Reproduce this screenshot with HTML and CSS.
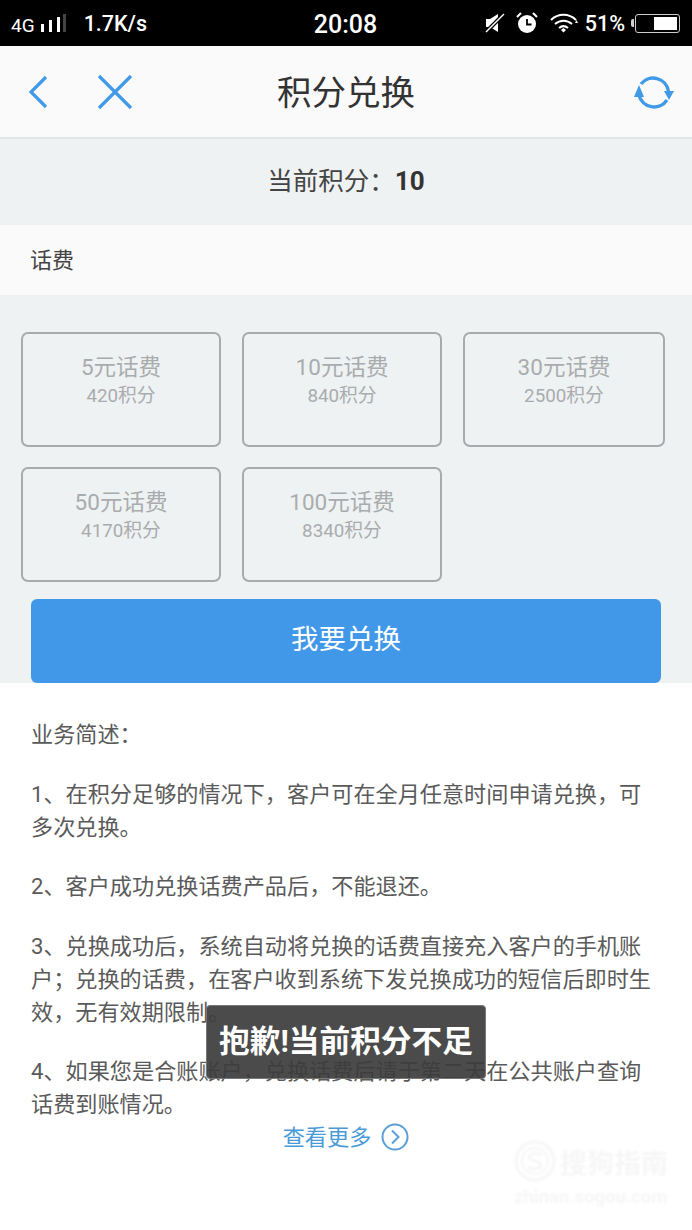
FILE: index.html
```html
<!DOCTYPE html>
<html lang="zh">

<head>
	<title>积分兑换</title>
	<link rel="stylesheet" href="styles.css">
</head>

<body>
	<div class="status-bar">
		<div class="status-left">
			<span class="net">4G</span>
			<svg class="signal" width="26" height="20" viewBox="0 0 26 20">
				<rect x="1" y="10" width="3" height="8" fill="#fff"/>
				<rect x="9" y="6" width="3" height="12" fill="#fff"/>
				<rect x="17" y="3" width="3" height="15" fill="#fff"/>
				<rect x="23" y="0" width="3" height="18" fill="#444"/>
			</svg>
			<span class="speed">1.7K/s</span>
		</div>
		<div class="status-time">20:08</div>
		<div class="status-right">
			<svg width="20" height="22" viewBox="0 0 20 22">
				<path d="M1 7h4l8-5v18l-8-5H1z" fill="#fff"/>
				<path d="M1 20L19 2" stroke="#000" stroke-width="4"/>
				<path d="M1 20L19 2" stroke="#fff" stroke-width="1.5"/>
			</svg>
			<svg class="alarm" width="22" height="22" viewBox="0 0 22 22">
				<circle cx="11" cy="12" r="9" fill="#fff"/>
				<path d="M11 7v5.500h4.500" fill="none" stroke="#000" stroke-width="1.800"/>
				<path d="M1 5l4-4M21 5l-4-4" stroke="#fff" stroke-width="2"/>
			</svg>
			<svg class="wifi" width="30" height="22" viewBox="0 0 30 22">
				<path d="M2 8C9 1 20 1 27 8M6 12c5-4.500 12-4.500 17 0M10 16c3-2.500 6-2.500 9 0" fill="none" stroke="#fff" stroke-width="2"/>
				<path d="M12 18l2.500-2 2.500 2-2.500 2.500z" fill="#fff"/>
				<path d="M26 11h3l-1.500-3z" fill="#fff"/>
			</svg>
			<span class="battery-pct">51%</span>
			<div class="battery-nub"></div>
			<div class="battery"><div class="battery-fill"></div></div>
		</div>
	</div>

	<header class="nav-bar">
		<div class="nav-left">
			<svg width="22" height="34" viewBox="0 0 22 34">
				<path d="M19 2L4 17l15 15" fill="none" stroke="#419ae8" stroke-width="3.200"/>
			</svg>
			<svg class="nav-close" width="36" height="36" viewBox="0 0 36 36">
				<path d="M2 2l32 32M34 2L2 34" fill="none" stroke="#419ae8" stroke-width="3.200"/>
			</svg>
		</div>
		<h1 class="nav-title">积分兑换</h1>
		<svg class="nav-refresh" width="40" height="36" viewBox="0 0 40 36">
			<path d="M7 10A15.500 15.500 0 0 1 34.500 17M33 26A15.500 15.500 0 0 1 5 21" fill="none" stroke="#419ae8" stroke-width="3.400"/>
			<path d="M0 23h10L5 11zM30 17h10l-5 9z" fill="#419ae8"/>
		</svg>
	</header>

	<div class="points">当前积分：<b>10</b></div>
	<div class="section-title">话费</div>

	<section class="exchange">
		<div class="cards">
			<div class="card"><div class="card-name">5元话费</div><div class="card-cost">420积分</div></div>
			<div class="card"><div class="card-name">10元话费</div><div class="card-cost">840积分</div></div>
			<div class="card"><div class="card-name">30元话费</div><div class="card-cost">2500积分</div></div>
			<div class="card"><div class="card-name">50元话费</div><div class="card-cost">4170积分</div></div>
			<div class="card"><div class="card-name">100元话费</div><div class="card-cost">8340积分</div></div>
		</div>
		<button class="submit">我要兑换</button>
	</section>

	<section class="desc">
		<p>业务简述：</p>
		<p>1、在积分足够的情况下，客户可在全月任意时间申请兑换，可多次兑换。</p>
		<p>2、客户成功兑换话费产品后，不能退还。</p>
		<p>3、兑换成功后，系统自动将兑换的话费直接充入客户的手机账户；兑换的话费，在客户收到系统下发兑换成功的短信后即时生效，无有效期限制。</p>
		<p>4、如果您是合账账户，兑换话费后请于第二天在公共账户查询话费到账情况。</p>
		<div class="more">
			<span>查看更多</span>
			<svg width="28" height="28" viewBox="0 0 28 28">
				<circle cx="14" cy="14" r="12.500" fill="none" stroke="#5b9fd8" stroke-width="2"/>
				<path d="M11 7.500l6.500 6.500-6.500 6.500" fill="none" stroke="#5b9fd8" stroke-width="2"/>
			</svg>
		</div>
	</section>

	<div class="toast">抱歉!当前积分不足</div>

	<div class="watermark">
		<div class="wm-top">
			<svg width="42" height="42" viewBox="0 0 42 42">
				<circle cx="21" cy="21" r="19" fill="none" stroke="#f6f6f6" stroke-width="3"/>
				<circle cx="21" cy="21" r="13" fill="none" stroke="#f6f6f6" stroke-width="2"/>
				<path d="M28 15c-4-3-13-2-13 2s12 4 12 8-9 5-13 2" fill="none" stroke="#f6f6f6" stroke-width="3"/>
			</svg>
			<span>搜狗指南</span>
		</div>
		<div class="wm-url">zhinan.sogou.com</div>
	</div>
</body>

</html>
```

FILE: styles.css
```css
* {
	box-sizing: border-box;
}
body {
	margin: 0;
	width: 692px;
	height: 1230px;
	overflow: hidden;
	position: relative;
	background-color: #fff;
	font-family: Roboto, "Noto Sans CJK SC", sans-serif;
	color: #555;
}
.status-bar {
	height: 46px;
	background-color: #000;
	color: #fff;
	display: grid;
	grid-template-columns: 1fr auto 1fr;
	align-items: center;
	padding: 0 12px 0 11px;
}
.status-left, .status-right {
	display: flex;
	align-items: center;
}
.status-right {
	justify-content: flex-end;
}
.net {
	font-size: 19px;
	margin-top: 5px;
}
.signal {
	margin-left: 5px;
	margin-top: 2px;
}
.speed {
	font-size: 21.500px;
	font-weight: 500;
	margin-left: 18px;
	margin-top: 1px;
}
.status-time {
	font-size: 25px;
	font-weight: 500;
	margin-top: 3px;
}
.alarm {
	margin-left: 11px;
}
.wifi {
	margin-left: 11px;
}
.battery-pct {
	font-size: 21.500px;
	font-weight: 500;
	margin-left: 6px;
	margin-top: 1px;
}
.battery-nub {
	width: 3px;
	height: 8px;
	margin-left: 6px;
	background-color: #ccc;
	border-radius: 2px 0 0 2px;
}
.battery {
	width: 45px;
	height: 19px;
	margin-left: 1px;
	border: 1.500px solid #ccc;
	border-radius: 3px;
	padding: 2px;
	display: flex;
	justify-content: flex-end;
}
.battery-fill {
	width: 23px;
	background-color: #fff;
}
.nav-bar {
	height: 93px;
	background-color: #fafafa;
	border-bottom: 2px solid #e2e5e6;
	display: flex;
	align-items: center;
	justify-content: space-between;
	padding: 0 18px 0 27px;
	position: relative;
}
.nav-left {
	display: flex;
	align-items: center;
}
.nav-close {
	margin-left: 48px;
}
.nav-title {
	position: absolute;
	left: 0;
	right: 0;
	margin: 0;
	padding-bottom: 4px;
	text-align: center;
	font-size: 34.500px;
	font-weight: 400;
	color: #333;
}
.points {
	height: 86px;
	padding-bottom: 7px;
	background-color: #eff2f3;
	display: flex;
	align-items: center;
	justify-content: center;
	font-size: 25.500px;
	color: #444;
}
.points b {
	margin-top: 4px;
	font-weight: 700;
	font-size: 26px;
	color: #333;
}
.section-title {
	height: 70px;
	padding: 0 0 4px 30px;
	background-color: #fafafa;
	display: flex;
	align-items: center;
	font-size: 22px;
	color: #444;
}
.exchange {
	height: 388px;
	background-color: #eff2f3;
	padding-top: 37px;
}
.cards {
	display: grid;
	grid-template-columns: 200px 200px 202px;
	grid-auto-rows: 115px;
	column-gap: 21px;
	row-gap: 20px;
	padding-left: 21px;
}
.card {
	border: 2px solid #a8abad;
	border-radius: 7px;
	text-align: center;
	padding-top: 18px;
	color: #a9acae;
}
.card-name {
	font-size: 22.500px;
	line-height: 30px;
}
.card-cost {
	font-size: 18.800px;
	line-height: 28px;
}
.submit {
	display: block;
	width: 630px;
	height: 84px;
	margin: 17px 0 0 31px;
	padding-bottom: 10px;
	border: 0;
	border-radius: 6px;
	background-color: #4198e8;
	color: #fff;
	font-family: inherit;
	font-size: 27.500px;
}
.desc {
	padding: 35px 31px 0;
	font-size: 22.150px;
	line-height: 33px;
	color: #5a5a5a;
}
.desc p {
	margin: 0 0 26.500px;
}
.more {
	display: flex;
	align-items: center;
	justify-content: center;
	gap: 10px;
	margin-top: -27px;
	color: #4a9ad8;
}
.toast {
	position: absolute;
	left: 206px;
	top: 1005px;
	width: 280px;
	height: 74px;
	background-color: rgba(60, 60, 60, 0.92);
	border: 1px solid #777;
	border-radius: 4px;
	color: #fff;
	font-size: 30.700px;
	font-weight: 700;
	text-align: center;
	line-height: 72px;
	white-space: nowrap;
}
.watermark {
	position: absolute;
	left: 514px;
	top: 1140px;
	color: #f6f6f6;
	filter: blur(0.8px);
}
.wm-top {
	display: flex;
	align-items: center;
	gap: 4px;
	font-size: 27px;
	font-weight: 700;
	white-space: nowrap;
}
.wm-url {
	font-size: 18.500px;
	font-weight: 700;
	line-height: 22px;
	margin-top: 4px;
	white-space: nowrap;
}
```
